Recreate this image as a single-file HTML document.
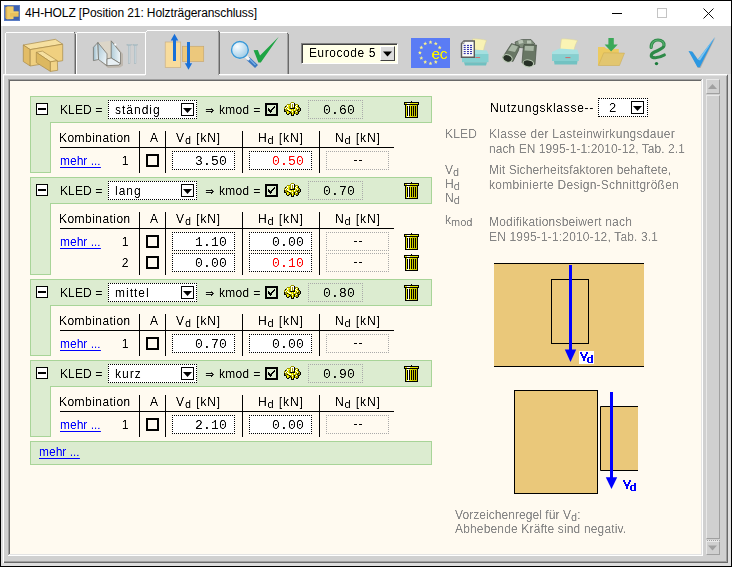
<!DOCTYPE html><html><head><meta charset="utf-8"><style>html,body{margin:0;padding:0;width:732px;height:567px;overflow:hidden;background:#d0d0d0;font-family:"Liberation Sans",sans-serif}</style></head><body><svg width="0" height="0" style="position:absolute"><filter id="crisp" x="0" y="0" width="100%" height="100%"><feComponentTransfer><feFuncA type="table" tableValues="0 0.1 0.9 1"/></feComponentTransfer></filter><filter id="crisp2" x="0" y="0" width="100%" height="100%"><feComponentTransfer><feFuncA type="discrete" tableValues="0 0 1 1 1"/></feComponentTransfer></filter></svg><div style="position:absolute;left:0px;top:0px;width:732px;height:567px;box-sizing:border-box;border:1px solid #000"></div><div style="position:absolute;left:1px;top:1px;width:730px;height:25px;background:#fff"></div><div style="position:absolute;left:1px;top:26px;width:2px;height:540px;background:#dedede"></div><div style="position:absolute;left:3px;top:74px;width:1px;height:492px;background:#fff"></div><div style="position:absolute;left:726px;top:75px;width:1px;height:487px;background:#a0a0a0"></div><div style="position:absolute;left:4px;top:561px;width:723px;height:1px;background:#a0a0a0"></div><div style="position:absolute;left:727px;top:75px;width:1px;height:488px;background:#696969"></div><div style="position:absolute;left:4px;top:562px;width:724px;height:1px;background:#696969"></div><div style="position:absolute;left:728px;top:74px;width:3px;height:492px;background:#dedede"></div><div style="position:absolute;left:1px;top:563px;width:730px;height:3px;background:#dedede"></div><div style="position:absolute;left:8px;top:79px;width:694px;height:1px;background:#a0a0a0"></div><div style="position:absolute;left:8px;top:79px;width:1px;height:476px;background:#a0a0a0"></div><div style="position:absolute;left:9px;top:80px;width:692px;height:1px;background:#696969"></div><div style="position:absolute;left:9px;top:80px;width:1px;height:474px;background:#696969"></div><div style="position:absolute;left:9px;top:554px;width:693px;height:1px;background:#e3e3e3"></div><div style="position:absolute;left:701px;top:80px;width:1px;height:475px;background:#e3e3e3"></div><div style="position:absolute;left:8px;top:555px;width:695px;height:1px;background:#fff"></div><div style="position:absolute;left:702px;top:79px;width:1px;height:477px;background:#fff"></div><div style="position:absolute;left:10px;top:81px;width:691px;height:473px;background:#fffaf0"></div><svg style="position:absolute;left:4px;top:5px" width="16" height="16" viewBox="0 0 16 16">
<rect width="16" height="16" fill="#3f62b0"/>
<rect x="0.5" y="0.5" width="15" height="15" fill="none" stroke="#5a7cc4" stroke-width="1"/>
<path d="M1.8 2.2 L3.5 1.3 L9.6 1.3 L9.6 6.5 L14.6 6.5 L14.6 11.8 L9.6 11.8 L8.6 14.2 L3 14.2 L1.8 13.5 Z" fill="#c89c40" opacity="0.5"/>
<path d="M1.7 2.3 L3.5 1.4 L9.5 1.4 L9.5 14 L3 14.2 L1.7 13.3 Z" fill="#f0cc68"/>
<path d="M1.7 2.3 L3.2 2.3 L3.2 14.1 L1.7 13.3 Z" fill="#dcb050"/>
<path d="M6 6.6 L14.5 6.6 L14.5 11.6 L6 11.6 Z" fill="#e8c05c"/>
<path d="M6 6.6 L14.5 6.6 L14.5 7.6 L6 7.6 Z" fill="#f4d878"/>
</svg><div style="position:absolute;left:25px;top:6px;font-family:'Liberation Sans',sans-serif;font-size:12px;line-height:14px;white-space:nowrap;letter-spacing:-0.1px">4H-HOLZ [Position 21: Holzträgeranschluss]</div><div style="position:absolute;left:612px;top:13px;width:10px;height:1px;background:#000"></div><div style="position:absolute;left:657px;top:8px;width:10px;height:10px;box-sizing:border-box;border:1px solid #c4c4c4"></div><svg style="position:absolute;left:703px;top:8px" width="11" height="11"><path d="M0.5 0.5 L10.5 10.5 M10.5 0.5 L0.5 10.5" stroke="#000" stroke-width="0.95"/></svg><div style="position:absolute;left:5px;top:33px;width:1px;height:41px;background:#ffffff"></div><div style="position:absolute;left:6px;top:32px;width:68px;height:1px;background:#ffffff"></div><div style="position:absolute;left:74px;top:33px;width:1px;height:41px;background:#a0a0a0"></div><div style="position:absolute;left:75px;top:34px;width:1px;height:40px;background:#696969"></div><div style="position:absolute;left:74px;top:32px;width:1px;height:1px;background:#696969"></div><div style="position:absolute;left:76px;top:33px;width:1px;height:41px;background:#ffffff"></div><div style="position:absolute;left:77px;top:32px;width:68px;height:1px;background:#ffffff"></div><div style="position:absolute;left:145px;top:32px;width:1px;height:43px;background:#ffffff"></div><div style="position:absolute;left:146px;top:31px;width:1px;height:1px;background:#ffffff"></div><div style="position:absolute;left:147px;top:30px;width:71px;height:1px;background:#ffffff"></div><div style="position:absolute;left:218px;top:32px;width:1px;height:43px;background:#a0a0a0"></div><div style="position:absolute;left:219px;top:32px;width:1px;height:43px;background:#696969"></div><div style="position:absolute;left:218px;top:31px;width:1px;height:1px;background:#696969"></div><div style="position:absolute;left:220px;top:32px;width:67px;height:1px;background:#ffffff"></div><div style="position:absolute;left:287px;top:33px;width:1px;height:41px;background:#a0a0a0"></div><div style="position:absolute;left:288px;top:34px;width:1px;height:40px;background:#696969"></div><div style="position:absolute;left:287px;top:33px;width:1px;height:1px;background:#696969"></div><div style="position:absolute;left:3px;top:74px;width:143px;height:1px;background:#ffffff"></div><div style="position:absolute;left:219px;top:74px;width:508px;height:1px;background:#ffffff"></div><div style="position:absolute;left:4px;top:75px;width:141px;height:1px;background:#e2e2e2"></div><div style="position:absolute;left:220px;top:75px;width:507px;height:1px;background:#e2e2e2"></div><svg style="position:absolute;left:0;top:0" width="732" height="80" viewBox="0 0 732 80">
<g stroke="#a88a48" stroke-width="0.7" stroke-linejoin="round">
<path d="M23.3 45 L55.4 39.3 L62.7 44.2 L30.2 49.6 Z" fill="#f6e0a0"/>
<path d="M23.3 45 L30.2 49.6 L30.2 66 L23.3 61.5 Z" fill="#e2bc66"/>
<path d="M30.2 49.6 L62.7 44.2 L62.7 60.7 L30.2 66 Z" fill="#f0d080"/>
<path d="M36.3 52.3 L42.4 51.1 L57.3 60.7 L50.4 61.8 Z" fill="#f6e0a0"/>
<path d="M36.3 52.3 L50.4 61.8 L50.4 71.4 L36.3 62.6 Z" fill="#dcb860"/>
<path d="M50.4 61.8 L57.3 60.7 L57.7 70.3 L50.4 71.4 Z" fill="#f2d488"/>
</g>
<!-- tab2: metal hanger -->
<defs>
<linearGradient id="mg1" x1="0" y1="0" x2="1" y2="0"><stop offset="0" stop-color="#98b8c8"/><stop offset="1" stop-color="#eef6f8"/></linearGradient>
<linearGradient id="mg2" x1="0" y1="0" x2="1" y2="1"><stop offset="0" stop-color="#a8c6d4"/><stop offset="1" stop-color="#f6fafc"/></linearGradient>
<linearGradient id="mg3" x1="0" y1="0" x2="1" y2="0"><stop offset="0" stop-color="#b0ccd8"/><stop offset="1" stop-color="#f0f6f8"/></linearGradient>
</defs>
<path d="M100 44 L113 42 L123 54 L123 65.5 L120 67.5 L108 68 L101 62 Z" fill="#a89c88" opacity="0.45"/>
<path d="M97.9 42.5 L111.2 40.8 L111.2 58 L107 58.9 L107 53.8 Z" fill="#dcd6c8"/>
<g stroke="#6c6860" stroke-width="0.7" stroke-linejoin="round">
<path d="M93.4 47.3 L97.9 42.5 L98.5 59.5 L93.4 60.6 Z" fill="url(#mg1)"/>
<path d="M97.9 42.5 L107 53.8 L107 65.7 L98.5 59.5 Z" fill="url(#mg2)"/>
<path d="M111.2 40.8 L120.5 52.7 L120.5 63.7 L111.2 58 Z" fill="url(#mg3)"/>
<path d="M107 65.7 L107 58.9 L111.2 58 L120.5 63.7 L118.8 65.1 Z" fill="#e8f0f4"/>
</g>
<circle cx="115.3" cy="44.6" r="1.1" fill="#ffffff"/>
<g fill="#e0ecf0" stroke="#90a4ac" stroke-width="0.5">
<rect x="128.3" y="45" width="1.6" height="18.5"/><rect x="134.3" y="45" width="1.6" height="18.5"/>
<rect x="127" y="44.3" width="4.2" height="1.2"/><rect x="133" y="44.3" width="4.2" height="1.2"/>
</g>
<!-- tab3: blocks + arrows -->
<rect x="165.2" y="42" width="15.5" height="25.6" fill="#f8dc9c" stroke="#c8b088" stroke-width="0.7"/>
<rect x="182.4" y="46.3" width="21.3" height="15.1" fill="#ecc87c" stroke="#c8a870" stroke-width="0.7"/>
<g fill="#1870d8">
<rect x="173" y="40" width="3" height="21"/>
<path d="M174.5 33.8 L178.3 40.6 L170.7 40.6 Z"/>
<rect x="187" y="42" width="3" height="22"/>
<path d="M184.9 63.3 L192.1 63.3 L188.5 69.8 Z"/>
</g>
<!-- tab4: magnifier + check -->
<defs><radialGradient id="lens" cx="0.35" cy="0.3" r="0.8"><stop offset="0" stop-color="#f8fcff"/><stop offset="1" stop-color="#98c8e4"/></radialGradient></defs>
<path d="M248 58.5 L256.5 66.5" stroke="#3a78c0" stroke-width="4.2" stroke-linecap="butt"/>
<path d="M249.5 59 L255.5 65" stroke="#78b0e8" stroke-width="1.2"/>
<path d="M246 56.5 L249.2 59.7" stroke="#f4f4f4" stroke-width="3"/>
<circle cx="239.9" cy="49.9" r="9.3" fill="#f0e8d8" opacity="0.6"/>
<circle cx="239.9" cy="49.9" r="8.4" fill="url(#lens)" stroke="#3898d8" stroke-width="1.4"/>
<path d="M253.6 50.2 L257.8 50 L260 55.6 L278.8 36.8 L260.8 62.4 L258.4 62.6 Z" fill="#1ea444"/>
</svg><div style="position:absolute;left:301px;top:43px;width:97px;height:21px;box-sizing:border-box;border-top:1px solid #808080;border-left:1px solid #808080;border-bottom:1px solid #fff;border-right:1px solid #fff;background:#ffffe8"></div><div style="position:absolute;left:302px;top:44px;width:95px;height:1px;background:#404040"></div><div style="position:absolute;left:302px;top:44px;width:1px;height:19px;background:#404040"></div><div style="position:absolute;left:309px;top:46px;font-family:'Liberation Sans',sans-serif;font-size:12px;line-height:14px;white-space:nowrap;filter:url(#crisp);letter-spacing:0.55px">Eurocode 5</div><div style="position:absolute;left:380px;top:46px;width:15px;height:15px;box-sizing:border-box;border-top:1px solid #fff;border-left:1px solid #fff;border-bottom:1px solid #404040;border-right:1px solid #404040;background:#dcdcdc"></div><svg style="position:absolute;left:380px;top:46px" width="15" height="15"><path d="M3 5.5 H12 L7.5 10.5 Z" fill="#000"/></svg><svg style="position:absolute;left:0;top:0" width="732" height="80" viewBox="0 0 732 80">
<!-- EC -->
<rect x="411" y="38" width="39" height="30" fill="#5a7cf5"/>
<g fill="#f6f090">
<path transform="translate(430.50,42.20)" d="M0,-2 L0.6,-0.7 L1.9,-0.6 L0.9,0.3 L1.2,1.7 L0,1 L-1.2,1.7 L-0.9,0.3 L-1.9,-0.6 L-0.6,-0.7 Z"/><path transform="translate(435.80,43.62)" d="M0,-2 L0.6,-0.7 L1.9,-0.6 L0.9,0.3 L1.2,1.7 L0,1 L-1.2,1.7 L-0.9,0.3 L-1.9,-0.6 L-0.6,-0.7 Z"/><path transform="translate(439.68,47.50)" d="M0,-2 L0.6,-0.7 L1.9,-0.6 L0.9,0.3 L1.2,1.7 L0,1 L-1.2,1.7 L-0.9,0.3 L-1.9,-0.6 L-0.6,-0.7 Z"/><path transform="translate(435.80,61.98)" d="M0,-2 L0.6,-0.7 L1.9,-0.6 L0.9,0.3 L1.2,1.7 L0,1 L-1.2,1.7 L-0.9,0.3 L-1.9,-0.6 L-0.6,-0.7 Z"/><path transform="translate(430.50,63.40)" d="M0,-2 L0.6,-0.7 L1.9,-0.6 L0.9,0.3 L1.2,1.7 L0,1 L-1.2,1.7 L-0.9,0.3 L-1.9,-0.6 L-0.6,-0.7 Z"/><path transform="translate(425.20,61.98)" d="M0,-2 L0.6,-0.7 L1.9,-0.6 L0.9,0.3 L1.2,1.7 L0,1 L-1.2,1.7 L-0.9,0.3 L-1.9,-0.6 L-0.6,-0.7 Z"/><path transform="translate(421.32,58.10)" d="M0,-2 L0.6,-0.7 L1.9,-0.6 L0.9,0.3 L1.2,1.7 L0,1 L-1.2,1.7 L-0.9,0.3 L-1.9,-0.6 L-0.6,-0.7 Z"/><path transform="translate(419.90,52.80)" d="M0,-2 L0.6,-0.7 L1.9,-0.6 L0.9,0.3 L1.2,1.7 L0,1 L-1.2,1.7 L-0.9,0.3 L-1.9,-0.6 L-0.6,-0.7 Z"/><path transform="translate(421.32,47.50)" d="M0,-2 L0.6,-0.7 L1.9,-0.6 L0.9,0.3 L1.2,1.7 L0,1 L-1.2,1.7 L-0.9,0.3 L-1.9,-0.6 L-0.6,-0.7 Z"/><path transform="translate(425.20,43.62)" d="M0,-2 L0.6,-0.7 L1.9,-0.6 L0.9,0.3 L1.2,1.7 L0,1 L-1.2,1.7 L-0.9,0.3 L-1.9,-0.6 L-0.6,-0.7 Z"/>
</g>
<text x="431.5" y="59.3" font-family="Liberation Sans" font-size="15.5" fill="#f8f400" letter-spacing="-0.4" filter="url(#crisp)">ec</text>
<!-- print preview -->
<path d="M472.4 39 C478 38.5 483 39.5 486.5 40.4 C485 44 484 47 483.5 50.8 L475 49.7 Z" fill="#f8f2b4" stroke="#d8d094" stroke-width="0.5"/>
<path d="M462 54 L474 49.8 L486.8 50.4 L488.5 54 Z" fill="#a4e0e0"/>
<path d="M462 54 L488.5 54 L488.5 62.2 L462 62.2 Z" fill="#84d0d0"/>
<path d="M464 62.2 L487 62.2 L486 65.5 L465 65.5 Z" fill="#70c0c0"/>
<rect x="475.4" y="57" width="4.7" height="1" fill="#d07070"/>
<path d="M461.5 43.5 L464 41 L474.3 41 L474.3 57.3 L461.5 57.3 Z" fill="#fafaf6" stroke="#5c5c5c" stroke-width="1.4"/>
<path d="M461.6 43.6 L464 43.6 L464 41.2 Z" fill="#ffffff" stroke="#5c5c5c" stroke-width="0.6"/>
<g fill="#2424a8">
<rect x="463.7" y="44.9" width="2" height="1"/><rect x="463.7" y="46.9" width="2" height="1"/><rect x="463.7" y="48.9" width="2" height="1"/><rect x="463.7" y="51.1" width="2" height="1"/><rect x="463.7" y="53.1" width="2" height="1"/><rect x="467" y="44.9" width="2" height="1"/><rect x="467" y="46.9" width="2" height="1"/><rect x="467" y="48.9" width="2" height="1"/><rect x="467" y="51.1" width="2" height="1"/><rect x="467" y="53.1" width="2" height="1"/><rect x="470" y="44.9" width="2" height="1"/><rect x="470" y="46.9" width="2" height="1"/><rect x="470" y="48.9" width="2" height="1"/><rect x="470" y="51.1" width="2" height="1"/><rect x="470" y="53.1" width="2" height="1"/>
</g>
<!-- binoculars -->
<g stroke="#3e483c" stroke-width="0.6" stroke-linejoin="round">
<path d="M515 42 L522 39.5 L531 39.5 L535 44 L524 48 L516 47 Z" fill="#7e8c7a"/>
<path d="M511.5 43.5 L519.5 46 L518.5 50.5 L513 61.5 L502.5 57.5 Z" fill="#687664"/>
<path d="M524 44.5 L536.5 45 L535 64.5 L522 63 L523 50 Z" fill="#687664"/>
<path d="M512 44.5 L518 46.5 L515 52 L508 50.5 Z" fill="#a8b6a4" stroke="none"/>
<path d="M525 46 L534 46 L533.5 51 L524.5 50.5 Z" fill="#a8b6a4" stroke="none"/>
<path d="M518 40.5 L522.5 39.8 L523.5 43 L519 44 Z" fill="#b8c4b4" stroke="none"/>
<path d="M527 40.5 L531 40.5 L531.5 43.5 L527 43.5 Z" fill="#b8c4b4" stroke="none"/>
</g>
<ellipse cx="507.5" cy="58.3" rx="4.8" ry="3.6" transform="rotate(22 507.5 58.3)" fill="#263026" stroke="#b8c8b2" stroke-width="1.1"/>
<ellipse cx="528.3" cy="63.4" rx="5.3" ry="3.5" transform="rotate(8 528.3 63.4)" fill="#263026" stroke="#b8c8b2" stroke-width="1.1"/>
<!-- printer -->
<path d="M561.4 39 C566 38.5 572 39.5 577.5 40.4 C575.5 44 574.5 47.5 573.8 51.1 L560.1 49.4 Z" fill="#faf4b4" stroke="#d8d098" stroke-width="0.5"/>
<path d="M552 52.1 L559.4 48.4 L577.5 49.8 L578.8 54.1 L552 54.1 Z" fill="#a8e2e2"/>
<path d="M552 54.1 L578.8 54.1 L578.8 61 L552 61 Z" fill="#86d0d0"/>
<path d="M554 61 L577.5 61 L577 64.5 L554.5 64.5 Z" fill="#72c2c2"/>
<rect x="565.4" y="57.1" width="5" height="1" fill="#d06a6a"/>
<!-- folder -->
<path d="M598 47.1 L604.4 47.1 L606.4 48.8 L618.8 49.1 L618.8 65.2 L598 65.2 Z" fill="#ecca60"/>
<path d="M603.7 52.8 L624.5 53.1 L619.5 65.5 L598.4 65.5 Z" fill="#e2c670" stroke="#c8a850" stroke-width="0.5"/>
<path d="M608.4 38 L613.8 38 L613.8 44.4 L617.8 44.4 L611.1 51.4 L604.6 44.4 L608.4 44.4 Z" fill="#3aa858"/>
<!-- help -->
<path d="M651.2 47.5 C650.8 42.5 654.5 40 658 40 C662 40 664.5 42.5 664 45.5 C663.5 48.8 658.5 50 654.5 52 C650.5 54 650.3 57.3 653.5 57.6 C656.5 58 661 57 664.3 55" fill="none" stroke="#2e8a48" stroke-width="3.2" stroke-linecap="round"/>
<path d="M651.2 47.5 C650.8 42.5 654.5 40 658 40 C662 40 664.5 42.5 664 45.5" fill="none" stroke="#58b070" stroke-width="1.2" stroke-linecap="round"/>
<circle cx="656.5" cy="63.6" r="1.7" fill="#1a7a3a"/>
<!-- blue check -->
<path d="M689.5 52 L693 52.3 L698.2 60 L715.5 37.5 L700.5 68 L698 68 Z" fill="#908a80" opacity="0.5"/>
<path d="M688.5 51 L692.2 51.5 L697.8 59.5 L715 37 L699.8 67.3 L697.5 67.3 Z" fill="#2c98e2"/>
<path d="M697.8 59.5 L715 37 L700 60.5 Z" fill="#7cc4f0"/>
</svg><div style="position:absolute;left:706px;top:79px;width:14px;height:15px;box-sizing:border-box;border-top:1px solid #e8e8e8;border-left:1px solid #e8e8e8;border-right:1px solid #a0a0a0;border-bottom:1px solid #a0a0a0"></div><svg style="position:absolute;left:706px;top:79px" width="14" height="15"><path d="M2 10 H11 L6.5 5 Z" fill="#a0a0a0"/></svg><div style="position:absolute;left:706px;top:95px;width:14px;height:444px;box-sizing:border-box;border-top:1px solid #e8e8e8;border-left:1px solid #e8e8e8;border-right:1px solid #a0a0a0;border-bottom:1px solid #a0a0a0"></div><div style="position:absolute;left:706px;top:540px;width:14px;height:1px;background:repeating-linear-gradient(90deg,#e8e8e8 0 1px,#a0a0a0 1px 2px)"></div><div style="position:absolute;left:706px;top:541px;width:14px;height:14px;box-sizing:border-box;border-top:1px solid #e8e8e8;border-left:1px solid #e8e8e8;border-right:1px solid #a0a0a0;border-bottom:1px solid #a0a0a0"></div><svg style="position:absolute;left:706px;top:541px" width="14" height="14"><path d="M2 4.5 H11 L6.5 9.5 Z" fill="#a0a0a0"/></svg><div style="position:absolute;left:490px;top:101px;font-family:'Liberation Sans',sans-serif;font-size:12px;line-height:14px;white-space:nowrap;filter:url(#crisp);letter-spacing:0.7px">Nutzungsklasse--</div><div style="position:absolute;left:598px;top:98px;width:50px;height:19px;box-sizing:border-box;border:1px dotted #000;background:#fff"></div><div style="position:absolute;left:609px;top:101px;font-family:'Liberation Sans',sans-serif;font-size:12px;line-height:14px;white-space:nowrap;filter:url(#crisp);font-size:13px">2</div><div style="position:absolute;left:631px;top:101px;width:13px;height:13px;box-sizing:border-box;border:1px solid #000;background:#fff"></div><svg style="position:absolute;left:631px;top:101px" width="13" height="13"><path d="M2 5 H11 L6.5 10 Z" fill="#000"/></svg><div style="position:absolute;left:445px;top:127px;font-family:'Liberation Sans',sans-serif;font-size:12px;line-height:14px;white-space:nowrap;filter:url(#crisp);color:#858585;letter-spacing:0.2px">KLED</div><div style="position:absolute;left:489px;top:127px;font-family:'Liberation Sans',sans-serif;font-size:12px;line-height:14px;white-space:nowrap;filter:url(#crisp);color:#858585;letter-spacing:0.3px">Klasse der Lasteinwirkungsdauer</div><div style="position:absolute;left:489px;top:142px;font-family:'Liberation Sans',sans-serif;font-size:12px;line-height:14px;white-space:nowrap;filter:url(#crisp);color:#858585;letter-spacing:0.06px">nach EN 1995-1-1:2010-12, Tab. 2.1</div><div style="position:absolute;left:445px;top:163px;font-family:'Liberation Sans',sans-serif;font-size:12px;line-height:14px;white-space:nowrap;filter:url(#crisp);color:#858585;">V<span style="font-size:11px;position:relative;top:2px">d</span></div><div style="position:absolute;left:489px;top:163px;font-family:'Liberation Sans',sans-serif;font-size:12px;line-height:14px;white-space:nowrap;filter:url(#crisp);color:#858585;letter-spacing:0.1px">Mit Sicherheitsfaktoren behaftete,</div><div style="position:absolute;left:445px;top:177px;font-family:'Liberation Sans',sans-serif;font-size:12px;line-height:14px;white-space:nowrap;filter:url(#crisp);color:#858585;">H<span style="font-size:11px;position:relative;top:2px">d</span></div><div style="position:absolute;left:489px;top:178px;font-family:'Liberation Sans',sans-serif;font-size:12px;line-height:14px;white-space:nowrap;filter:url(#crisp);color:#858585;letter-spacing:0.27px">kombinierte Design-Schnittgrößen</div><div style="position:absolute;left:445px;top:191px;font-family:'Liberation Sans',sans-serif;font-size:12px;line-height:14px;white-space:nowrap;filter:url(#crisp);color:#858585;">N<span style="font-size:11px;position:relative;top:2px">d</span></div><div style="position:absolute;left:445px;top:213px;font-family:'Liberation Sans',sans-serif;font-size:12px;line-height:14px;white-space:nowrap;filter:url(#crisp);color:#858585;">k<span style="font-size:11px;position:relative;top:2px">mod</span></div><div style="position:absolute;left:489px;top:215px;font-family:'Liberation Sans',sans-serif;font-size:12px;line-height:14px;white-space:nowrap;filter:url(#crisp);color:#858585;letter-spacing:0.2px">Modifikationsbeiwert nach</div><div style="position:absolute;left:489px;top:230px;font-family:'Liberation Sans',sans-serif;font-size:12px;line-height:14px;white-space:nowrap;filter:url(#crisp);color:#858585;letter-spacing:0.16px">EN 1995-1-1:2010-12, Tab. 3.1</div><div style="position:absolute;left:455px;top:508px;font-family:'Liberation Sans',sans-serif;font-size:12px;line-height:14px;white-space:nowrap;filter:url(#crisp);color:#858585;letter-spacing:0.06px">Vorzeichenregel für V<span style="font-size:11px;position:relative;top:2px">d</span>:</div><div style="position:absolute;left:455px;top:522px;font-family:'Liberation Sans',sans-serif;font-size:12px;line-height:14px;white-space:nowrap;filter:url(#crisp);color:#858585;letter-spacing:0.16px">Abhebende Kräfte sind negativ.</div><svg style="position:absolute;left:0;top:0" width="732" height="567" viewBox="0 0 732 567">
<rect x="494" y="263" width="150" height="104" fill="#eac87a"/>
<rect x="494" y="263" width="150" height="1" fill="#000"/>
<rect x="494" y="366" width="150" height="1" fill="#000"/>
<rect x="551.5" y="279.5" width="37" height="64" fill="none" stroke="#000" stroke-width="1"/>
<rect x="569" y="265" width="3" height="86" fill="#0000ff"/>
<path d="M564.8 349.6 L576.2 349.6 L570.5 362 Z" fill="#0000ff"/>
<rect x="579" y="351" width="15" height="13" fill="#fff"/>
<rect x="514.5" y="390.5" width="83" height="103" fill="#eac87a" stroke="#000" stroke-width="1"/>
<path d="M638 406.5 L600.5 406.5 L600.5 470.5 L638 470.5" fill="#eac87a" stroke="#000" stroke-width="1"/>
<rect x="610" y="392" width="3" height="86" fill="#0000ff"/>
<path d="M605.8 477.3 L617.2 477.3 L611.5 489 Z" fill="#0000ff"/>
</svg><svg style="position:absolute;left:0;top:0" width="732" height="567" shape-rendering="crispEdges"><g fill="#0000ff"><rect x="580" y="352" width="1" height="1"/><rect x="581" y="352" width="1" height="1"/><rect x="586" y="352" width="1" height="1"/><rect x="587" y="352" width="1" height="1"/><rect x="580" y="353" width="1" height="1"/><rect x="581" y="353" width="1" height="1"/><rect x="586" y="353" width="1" height="1"/><rect x="587" y="353" width="1" height="1"/><rect x="581" y="354" width="1" height="1"/><rect x="582" y="354" width="1" height="1"/><rect x="585" y="354" width="1" height="1"/><rect x="586" y="354" width="1" height="1"/><rect x="581" y="355" width="1" height="1"/><rect x="582" y="355" width="1" height="1"/><rect x="585" y="355" width="1" height="1"/><rect x="586" y="355" width="1" height="1"/><rect x="582" y="356" width="1" height="1"/><rect x="583" y="356" width="1" height="1"/><rect x="584" y="356" width="1" height="1"/><rect x="585" y="356" width="1" height="1"/><rect x="582" y="357" width="1" height="1"/><rect x="583" y="357" width="1" height="1"/><rect x="584" y="357" width="1" height="1"/><rect x="585" y="357" width="1" height="1"/><rect x="583" y="358" width="1" height="1"/><rect x="584" y="358" width="1" height="1"/><rect x="583" y="359" width="1" height="1"/><rect x="584" y="359" width="1" height="1"/><rect x="583" y="360" width="1" height="1"/><rect x="584" y="360" width="1" height="1"/><rect x="591" y="355" width="1" height="1"/><rect x="592" y="355" width="1" height="1"/><rect x="591" y="356" width="1" height="1"/><rect x="592" y="356" width="1" height="1"/><rect x="588" y="357" width="1" height="1"/><rect x="589" y="357" width="1" height="1"/><rect x="590" y="357" width="1" height="1"/><rect x="591" y="357" width="1" height="1"/><rect x="592" y="357" width="1" height="1"/><rect x="587" y="358" width="1" height="1"/><rect x="588" y="358" width="1" height="1"/><rect x="591" y="358" width="1" height="1"/><rect x="592" y="358" width="1" height="1"/><rect x="587" y="359" width="1" height="1"/><rect x="588" y="359" width="1" height="1"/><rect x="591" y="359" width="1" height="1"/><rect x="592" y="359" width="1" height="1"/><rect x="587" y="360" width="1" height="1"/><rect x="588" y="360" width="1" height="1"/><rect x="591" y="360" width="1" height="1"/><rect x="592" y="360" width="1" height="1"/><rect x="587" y="361" width="1" height="1"/><rect x="588" y="361" width="1" height="1"/><rect x="591" y="361" width="1" height="1"/><rect x="592" y="361" width="1" height="1"/><rect x="588" y="362" width="1" height="1"/><rect x="589" y="362" width="1" height="1"/><rect x="590" y="362" width="1" height="1"/><rect x="591" y="362" width="1" height="1"/><rect x="592" y="362" width="1" height="1"/></g></svg><svg style="position:absolute;left:0;top:0" width="732" height="567" shape-rendering="crispEdges"><g fill="#0000ff"><rect x="623" y="480" width="1" height="1"/><rect x="624" y="480" width="1" height="1"/><rect x="629" y="480" width="1" height="1"/><rect x="630" y="480" width="1" height="1"/><rect x="623" y="481" width="1" height="1"/><rect x="624" y="481" width="1" height="1"/><rect x="629" y="481" width="1" height="1"/><rect x="630" y="481" width="1" height="1"/><rect x="624" y="482" width="1" height="1"/><rect x="625" y="482" width="1" height="1"/><rect x="628" y="482" width="1" height="1"/><rect x="629" y="482" width="1" height="1"/><rect x="624" y="483" width="1" height="1"/><rect x="625" y="483" width="1" height="1"/><rect x="628" y="483" width="1" height="1"/><rect x="629" y="483" width="1" height="1"/><rect x="625" y="484" width="1" height="1"/><rect x="626" y="484" width="1" height="1"/><rect x="627" y="484" width="1" height="1"/><rect x="628" y="484" width="1" height="1"/><rect x="625" y="485" width="1" height="1"/><rect x="626" y="485" width="1" height="1"/><rect x="627" y="485" width="1" height="1"/><rect x="628" y="485" width="1" height="1"/><rect x="626" y="486" width="1" height="1"/><rect x="627" y="486" width="1" height="1"/><rect x="626" y="487" width="1" height="1"/><rect x="627" y="487" width="1" height="1"/><rect x="626" y="488" width="1" height="1"/><rect x="627" y="488" width="1" height="1"/><rect x="634" y="483" width="1" height="1"/><rect x="635" y="483" width="1" height="1"/><rect x="634" y="484" width="1" height="1"/><rect x="635" y="484" width="1" height="1"/><rect x="631" y="485" width="1" height="1"/><rect x="632" y="485" width="1" height="1"/><rect x="633" y="485" width="1" height="1"/><rect x="634" y="485" width="1" height="1"/><rect x="635" y="485" width="1" height="1"/><rect x="630" y="486" width="1" height="1"/><rect x="631" y="486" width="1" height="1"/><rect x="634" y="486" width="1" height="1"/><rect x="635" y="486" width="1" height="1"/><rect x="630" y="487" width="1" height="1"/><rect x="631" y="487" width="1" height="1"/><rect x="634" y="487" width="1" height="1"/><rect x="635" y="487" width="1" height="1"/><rect x="630" y="488" width="1" height="1"/><rect x="631" y="488" width="1" height="1"/><rect x="634" y="488" width="1" height="1"/><rect x="635" y="488" width="1" height="1"/><rect x="630" y="489" width="1" height="1"/><rect x="631" y="489" width="1" height="1"/><rect x="634" y="489" width="1" height="1"/><rect x="635" y="489" width="1" height="1"/><rect x="631" y="490" width="1" height="1"/><rect x="632" y="490" width="1" height="1"/><rect x="633" y="490" width="1" height="1"/><rect x="634" y="490" width="1" height="1"/><rect x="635" y="490" width="1" height="1"/></g></svg><div style="position:absolute;left:30px;top:96px;width:402px;height:27px;box-sizing:border-box;border:1px solid #a8d498;background:#dcecd0"></div><div style="position:absolute;left:30px;top:122px;width:21px;height:51px;box-sizing:border-box;border:1px solid #a8d498;background:#dcecd0"></div><div style="position:absolute;left:31px;top:121px;width:19px;height:3px;background:#dcecd0"></div><div style="position:absolute;left:36px;top:103px;width:12px;height:12px;box-sizing:border-box;border:1px solid #000;background:#fff"></div><div style="position:absolute;left:38px;top:108px;width:8px;height:2px;background:#000"></div><div style="position:absolute;left:60px;top:103px;font-family:'Liberation Sans',sans-serif;font-size:12px;line-height:14px;white-space:nowrap;filter:url(#crisp);letter-spacing:0.1px">KLED =</div><div style="position:absolute;left:108px;top:100px;width:89px;height:19px;box-sizing:border-box;border:1px dotted #000;background:#fff"></div><div style="position:absolute;left:115px;top:103px;font-family:'Liberation Sans',sans-serif;font-size:12px;line-height:14px;white-space:nowrap;filter:url(#crisp);letter-spacing:1px">ständig</div><div style="position:absolute;left:181px;top:103px;width:13px;height:13px;box-sizing:border-box;border:1px solid #000;background:#fff"></div><svg style="position:absolute;left:181px;top:103px" width="13" height="13"><path d="M2 5 H11 L6.5 10 Z" fill="#000"/></svg><div style="position:absolute;left:205px;top:103px;font-family:'Liberation Sans',sans-serif;font-size:12px;line-height:14px;white-space:nowrap;filter:url(#crisp);font-size:11px">&#8658;</div><div style="position:absolute;left:219px;top:103px;font-family:'Liberation Sans',sans-serif;font-size:12px;line-height:14px;white-space:nowrap;filter:url(#crisp);letter-spacing:0.3px">kmod =</div><div style="position:absolute;left:265px;top:103px;width:13px;height:13px;box-sizing:border-box;border:2px solid #000"></div><svg style="position:absolute;left:268px;top:106px" width="7" height="7" shape-rendering="crispEdges"><g fill="#000"><rect x="6" y="0" width="1" height="1"/><rect x="5" y="1" width="1" height="1"/><rect x="6" y="1" width="1" height="1"/><rect x="0" y="2" width="1" height="1"/><rect x="4" y="2" width="1" height="1"/><rect x="5" y="2" width="1" height="1"/><rect x="0" y="3" width="1" height="1"/><rect x="1" y="3" width="1" height="1"/><rect x="3" y="3" width="1" height="1"/><rect x="4" y="3" width="1" height="1"/><rect x="0" y="4" width="1" height="1"/><rect x="1" y="4" width="1" height="1"/><rect x="2" y="4" width="1" height="1"/><rect x="3" y="4" width="1" height="1"/><rect x="1" y="5" width="1" height="1"/><rect x="2" y="5" width="1" height="1"/><rect x="3" y="5" width="1" height="1"/><rect x="2" y="6" width="1" height="1"/></g></svg><svg style="position:absolute;left:283px;top:101px" width="19" height="15" shape-rendering="crispEdges"><path d="M8 1h1v1h-1zM9 1h1v1h-1zM10 1h1v1h-1zM7 2h1v1h-1zM4 3h1v1h-1zM5 3h1v1h-1zM6 3h1v1h-1zM7 3h1v1h-1zM9 3h1v1h-1zM12 3h1v1h-1zM13 3h1v1h-1zM14 3h1v1h-1zM3 4h1v1h-1zM7 4h1v1h-1zM9 4h1v1h-1zM12 4h1v1h-1zM3 5h1v1h-1zM6 5h1v1h-1zM7 5h1v1h-1zM9 5h1v1h-1zM14 5h1v1h-1zM1 6h1v1h-1zM2 6h1v1h-1zM4 6h1v1h-1zM6 6h1v1h-1zM7 6h1v1h-1zM9 6h1v1h-1zM10 6h1v1h-1zM15 6h1v1h-1zM1 7h1v1h-1zM3 7h1v1h-1zM6 7h1v1h-1zM13 7h1v1h-1zM15 7h1v1h-1zM16 7h1v1h-1zM2 8h1v1h-1zM3 8h1v1h-1zM8 8h1v1h-1zM10 8h1v1h-1zM13 8h1v1h-1zM14 8h1v1h-1zM16 8h1v1h-1zM2 9h1v1h-1zM3 9h1v1h-1zM5 9h1v1h-1zM10 9h1v1h-1zM12 9h1v1h-1zM13 9h1v1h-1zM15 9h1v1h-1zM16 9h1v1h-1zM3 10h1v1h-1zM5 10h1v1h-1zM7 10h1v1h-1zM8 10h1v1h-1zM10 10h1v1h-1zM12 10h1v1h-1zM14 10h1v1h-1zM6 11h1v1h-1zM8 11h1v1h-1zM10 11h1v1h-1zM13 11h1v1h-1zM14 11h1v1h-1zM5 12h1v1h-1zM7 12h1v1h-1zM10 12h1v1h-1zM12 12h1v1h-1zM13 12h1v1h-1zM14 12h1v1h-1z" fill="#9c9800"/><path d="M5 4h1v1h-1zM6 4h1v1h-1zM14 4h1v1h-1zM5 5h1v1h-1zM13 5h1v1h-1zM5 6h1v1h-1zM12 6h1v1h-1zM14 6h1v1h-1zM5 7h1v1h-1zM12 7h1v1h-1zM4 8h1v1h-1zM6 8h1v1h-1zM7 8h1v1h-1zM9 8h1v1h-1zM12 8h1v1h-1zM8 9h1v1h-1zM9 9h1v1h-1zM11 9h1v1h-1zM4 10h1v1h-1zM4 11h1v1h-1zM5 11h1v1h-1zM9 11h1v1h-1zM12 11h1v1h-1zM4 12h1v1h-1zM9 12h1v1h-1zM9 13h1v1h-1z" fill="#ffff00"/><path d="M8 2h1v1h-1zM9 2h1v1h-1zM10 2h1v1h-1zM8 3h1v1h-1zM10 3h1v1h-1zM4 4h1v1h-1zM8 4h1v1h-1zM10 4h1v1h-1zM13 4h1v1h-1zM4 5h1v1h-1zM8 5h1v1h-1zM10 5h1v1h-1zM12 5h1v1h-1zM3 6h1v1h-1zM8 6h1v1h-1zM13 6h1v1h-1zM2 7h1v1h-1zM4 7h1v1h-1zM14 7h1v1h-1zM5 8h1v1h-1zM11 8h1v1h-1zM6 9h1v1h-1zM7 9h1v1h-1zM9 10h1v1h-1zM13 10h1v1h-1z" fill="#ffffff"/><path d="M11 2h1v1h-1zM11 3h1v1h-1zM11 4h1v1h-1zM15 4h1v1h-1zM2 5h1v1h-1zM11 5h1v1h-1zM15 5h1v1h-1zM11 6h1v1h-1zM16 6h1v1h-1zM7 7h1v1h-1zM8 7h1v1h-1zM9 7h1v1h-1zM10 7h1v1h-1zM11 7h1v1h-1zM17 7h1v1h-1zM1 8h1v1h-1zM15 8h1v1h-1zM17 8h1v1h-1zM1 9h1v1h-1zM4 9h1v1h-1zM14 9h1v1h-1zM17 9h1v1h-1zM1 10h1v1h-1zM2 10h1v1h-1zM6 10h1v1h-1zM11 10h1v1h-1zM15 10h1v1h-1zM16 10h1v1h-1zM3 11h1v1h-1zM7 11h1v1h-1zM11 11h1v1h-1zM15 11h1v1h-1zM3 12h1v1h-1zM6 12h1v1h-1zM8 12h1v1h-1zM11 12h1v1h-1zM15 12h1v1h-1zM4 13h1v1h-1zM5 13h1v1h-1zM8 13h1v1h-1zM10 13h1v1h-1zM13 13h1v1h-1zM14 13h1v1h-1zM8 14h1v1h-1zM9 14h1v1h-1zM10 14h1v1h-1z" fill="#000000"/></svg><div style="position:absolute;left:308px;top:100px;width:55px;height:19px;box-sizing:border-box;border:1px dotted #aaa;background:transparent"></div><div style="position:absolute;left:155px;width:200px;text-align:right;top:104px;font-family:'Liberation Mono',monospace;font-size:13px;line-height:14px;letter-spacing:0.2px;color:#000;white-space:nowrap;filter:url(#crisp)">0.60</div><svg style="position:absolute;left:404px;top:100px" width="16" height="19" viewBox="0 0 16 19">
<rect x="1" y="4" width="13" height="14" fill="#000"/>
<rect x="2" y="5" width="11" height="12" fill="#e8e800"/>
<rect x="3" y="5" width="2" height="12" fill="#fff"/>
<rect x="8" y="5" width="5" height="12" fill="#c8c800"/>
<rect x="3" y="6" width="1" height="10" fill="#000"/>
<rect x="5" y="6" width="1" height="10" fill="#000"/>
<rect x="7" y="6" width="1" height="10" fill="#000"/>
<rect x="9" y="6" width="1" height="10" fill="#000"/>
<rect x="11" y="6" width="1" height="10" fill="#000"/>
<rect x="0" y="2" width="15" height="3" fill="#000"/>
<rect x="1" y="3" width="13" height="1" fill="#e8e800"/>
<rect x="3" y="3" width="3" height="1" fill="#fff"/>
<rect x="7" y="1" width="1" height="1" fill="#000"/>
</svg><div style="position:absolute;left:59px;top:131px;font-family:'Liberation Sans',sans-serif;font-size:12px;line-height:14px;white-space:nowrap;filter:url(#crisp);letter-spacing:0.45px">Kombination</div><div style="position:absolute;left:150px;top:131px;font-family:'Liberation Sans',sans-serif;font-size:12px;line-height:14px;white-space:nowrap;filter:url(#crisp);">A</div><div style="position:absolute;left:176px;top:131px;font-family:'Liberation Sans',sans-serif;font-size:12px;line-height:14px;white-space:nowrap;filter:url(#crisp);letter-spacing:0.9px">V<span style="font-size:11px;position:relative;top:2px">d</span> [kN]</div><div style="position:absolute;left:258px;top:131px;font-family:'Liberation Sans',sans-serif;font-size:12px;line-height:14px;white-space:nowrap;filter:url(#crisp);letter-spacing:0.9px">H<span style="font-size:11px;position:relative;top:2px">d</span> [kN]</div><div style="position:absolute;left:335px;top:131px;font-family:'Liberation Sans',sans-serif;font-size:12px;line-height:14px;white-space:nowrap;filter:url(#crisp);letter-spacing:0.9px">N<span style="font-size:11px;position:relative;top:2px">d</span> [kN]</div><div style="position:absolute;left:60px;top:147px;width:334px;height:1px;background:#000"></div><div style="position:absolute;left:139px;top:131px;width:1px;height:42px;background:#000"></div><div style="position:absolute;left:165px;top:131px;width:1px;height:42px;background:#000"></div><div style="position:absolute;left:242px;top:131px;width:1px;height:42px;background:#000"></div><div style="position:absolute;left:319px;top:131px;width:1px;height:42px;background:#000"></div><div style="position:absolute;left:60px;top:154px;font-family:'Liberation Sans',sans-serif;font-size:12px;line-height:14px;white-space:nowrap;filter:url(#crisp);color:#0000ff;text-decoration:underline;text-underline-offset:2px">mehr ...</div><div style="position:absolute;left:100px;top:154px;font-family:'Liberation Sans',sans-serif;font-size:12px;line-height:14px;white-space:nowrap;filter:url(#crisp);width:28.5px;text-align:right">1</div><div style="position:absolute;left:146px;top:154px;width:13px;height:13px;box-sizing:border-box;border:2px solid #000"></div><div style="position:absolute;left:172px;top:151px;width:63px;height:19px;box-sizing:border-box;border:1px dotted #000;background:#fff"></div><div style="position:absolute;left:27px;width:200px;text-align:right;top:155px;font-family:'Liberation Mono',monospace;font-size:13px;line-height:14px;letter-spacing:0.2px;color:#000;white-space:nowrap;filter:url(#crisp)">3.50</div><div style="position:absolute;left:249px;top:151px;width:63px;height:19px;box-sizing:border-box;border:1px dotted #000;background:#fff"></div><div style="position:absolute;left:104px;width:200px;text-align:right;top:155px;font-family:'Liberation Mono',monospace;font-size:13px;line-height:14px;letter-spacing:0.2px;color:#f00;white-space:nowrap;filter:url(#crisp)">0.50</div><div style="position:absolute;left:326px;top:151px;width:63px;height:19px;box-sizing:border-box;border:1px dotted #aaa;background:transparent"></div><div style="position:absolute;left:354px;top:160px;width:3px;height:1px;background:#000"></div><div style="position:absolute;left:359px;top:160px;width:3px;height:1px;background:#000"></div><div style="position:absolute;left:30px;top:177px;width:402px;height:27px;box-sizing:border-box;border:1px solid #a8d498;background:#dcecd0"></div><div style="position:absolute;left:30px;top:203px;width:21px;height:51px;box-sizing:border-box;border:1px solid #a8d498;background:#dcecd0"></div><div style="position:absolute;left:30px;top:203px;width:21px;height:72px;box-sizing:border-box;border:1px solid #a8d498;background:#dcecd0"></div><div style="position:absolute;left:31px;top:202px;width:19px;height:3px;background:#dcecd0"></div><div style="position:absolute;left:36px;top:184px;width:12px;height:12px;box-sizing:border-box;border:1px solid #000;background:#fff"></div><div style="position:absolute;left:38px;top:189px;width:8px;height:2px;background:#000"></div><div style="position:absolute;left:60px;top:184px;font-family:'Liberation Sans',sans-serif;font-size:12px;line-height:14px;white-space:nowrap;filter:url(#crisp);letter-spacing:0.1px">KLED =</div><div style="position:absolute;left:108px;top:181px;width:89px;height:19px;box-sizing:border-box;border:1px dotted #000;background:#fff"></div><div style="position:absolute;left:115px;top:184px;font-family:'Liberation Sans',sans-serif;font-size:12px;line-height:14px;white-space:nowrap;filter:url(#crisp);letter-spacing:1px">lang</div><div style="position:absolute;left:181px;top:184px;width:13px;height:13px;box-sizing:border-box;border:1px solid #000;background:#fff"></div><svg style="position:absolute;left:181px;top:184px" width="13" height="13"><path d="M2 5 H11 L6.5 10 Z" fill="#000"/></svg><div style="position:absolute;left:205px;top:184px;font-family:'Liberation Sans',sans-serif;font-size:12px;line-height:14px;white-space:nowrap;filter:url(#crisp);font-size:11px">&#8658;</div><div style="position:absolute;left:219px;top:184px;font-family:'Liberation Sans',sans-serif;font-size:12px;line-height:14px;white-space:nowrap;filter:url(#crisp);letter-spacing:0.3px">kmod =</div><div style="position:absolute;left:265px;top:184px;width:13px;height:13px;box-sizing:border-box;border:2px solid #000"></div><svg style="position:absolute;left:268px;top:187px" width="7" height="7" shape-rendering="crispEdges"><g fill="#000"><rect x="6" y="0" width="1" height="1"/><rect x="5" y="1" width="1" height="1"/><rect x="6" y="1" width="1" height="1"/><rect x="0" y="2" width="1" height="1"/><rect x="4" y="2" width="1" height="1"/><rect x="5" y="2" width="1" height="1"/><rect x="0" y="3" width="1" height="1"/><rect x="1" y="3" width="1" height="1"/><rect x="3" y="3" width="1" height="1"/><rect x="4" y="3" width="1" height="1"/><rect x="0" y="4" width="1" height="1"/><rect x="1" y="4" width="1" height="1"/><rect x="2" y="4" width="1" height="1"/><rect x="3" y="4" width="1" height="1"/><rect x="1" y="5" width="1" height="1"/><rect x="2" y="5" width="1" height="1"/><rect x="3" y="5" width="1" height="1"/><rect x="2" y="6" width="1" height="1"/></g></svg><svg style="position:absolute;left:283px;top:182px" width="19" height="15" shape-rendering="crispEdges"><path d="M8 1h1v1h-1zM9 1h1v1h-1zM10 1h1v1h-1zM7 2h1v1h-1zM4 3h1v1h-1zM5 3h1v1h-1zM6 3h1v1h-1zM7 3h1v1h-1zM9 3h1v1h-1zM12 3h1v1h-1zM13 3h1v1h-1zM14 3h1v1h-1zM3 4h1v1h-1zM7 4h1v1h-1zM9 4h1v1h-1zM12 4h1v1h-1zM3 5h1v1h-1zM6 5h1v1h-1zM7 5h1v1h-1zM9 5h1v1h-1zM14 5h1v1h-1zM1 6h1v1h-1zM2 6h1v1h-1zM4 6h1v1h-1zM6 6h1v1h-1zM7 6h1v1h-1zM9 6h1v1h-1zM10 6h1v1h-1zM15 6h1v1h-1zM1 7h1v1h-1zM3 7h1v1h-1zM6 7h1v1h-1zM13 7h1v1h-1zM15 7h1v1h-1zM16 7h1v1h-1zM2 8h1v1h-1zM3 8h1v1h-1zM8 8h1v1h-1zM10 8h1v1h-1zM13 8h1v1h-1zM14 8h1v1h-1zM16 8h1v1h-1zM2 9h1v1h-1zM3 9h1v1h-1zM5 9h1v1h-1zM10 9h1v1h-1zM12 9h1v1h-1zM13 9h1v1h-1zM15 9h1v1h-1zM16 9h1v1h-1zM3 10h1v1h-1zM5 10h1v1h-1zM7 10h1v1h-1zM8 10h1v1h-1zM10 10h1v1h-1zM12 10h1v1h-1zM14 10h1v1h-1zM6 11h1v1h-1zM8 11h1v1h-1zM10 11h1v1h-1zM13 11h1v1h-1zM14 11h1v1h-1zM5 12h1v1h-1zM7 12h1v1h-1zM10 12h1v1h-1zM12 12h1v1h-1zM13 12h1v1h-1zM14 12h1v1h-1z" fill="#9c9800"/><path d="M5 4h1v1h-1zM6 4h1v1h-1zM14 4h1v1h-1zM5 5h1v1h-1zM13 5h1v1h-1zM5 6h1v1h-1zM12 6h1v1h-1zM14 6h1v1h-1zM5 7h1v1h-1zM12 7h1v1h-1zM4 8h1v1h-1zM6 8h1v1h-1zM7 8h1v1h-1zM9 8h1v1h-1zM12 8h1v1h-1zM8 9h1v1h-1zM9 9h1v1h-1zM11 9h1v1h-1zM4 10h1v1h-1zM4 11h1v1h-1zM5 11h1v1h-1zM9 11h1v1h-1zM12 11h1v1h-1zM4 12h1v1h-1zM9 12h1v1h-1zM9 13h1v1h-1z" fill="#ffff00"/><path d="M8 2h1v1h-1zM9 2h1v1h-1zM10 2h1v1h-1zM8 3h1v1h-1zM10 3h1v1h-1zM4 4h1v1h-1zM8 4h1v1h-1zM10 4h1v1h-1zM13 4h1v1h-1zM4 5h1v1h-1zM8 5h1v1h-1zM10 5h1v1h-1zM12 5h1v1h-1zM3 6h1v1h-1zM8 6h1v1h-1zM13 6h1v1h-1zM2 7h1v1h-1zM4 7h1v1h-1zM14 7h1v1h-1zM5 8h1v1h-1zM11 8h1v1h-1zM6 9h1v1h-1zM7 9h1v1h-1zM9 10h1v1h-1zM13 10h1v1h-1z" fill="#ffffff"/><path d="M11 2h1v1h-1zM11 3h1v1h-1zM11 4h1v1h-1zM15 4h1v1h-1zM2 5h1v1h-1zM11 5h1v1h-1zM15 5h1v1h-1zM11 6h1v1h-1zM16 6h1v1h-1zM7 7h1v1h-1zM8 7h1v1h-1zM9 7h1v1h-1zM10 7h1v1h-1zM11 7h1v1h-1zM17 7h1v1h-1zM1 8h1v1h-1zM15 8h1v1h-1zM17 8h1v1h-1zM1 9h1v1h-1zM4 9h1v1h-1zM14 9h1v1h-1zM17 9h1v1h-1zM1 10h1v1h-1zM2 10h1v1h-1zM6 10h1v1h-1zM11 10h1v1h-1zM15 10h1v1h-1zM16 10h1v1h-1zM3 11h1v1h-1zM7 11h1v1h-1zM11 11h1v1h-1zM15 11h1v1h-1zM3 12h1v1h-1zM6 12h1v1h-1zM8 12h1v1h-1zM11 12h1v1h-1zM15 12h1v1h-1zM4 13h1v1h-1zM5 13h1v1h-1zM8 13h1v1h-1zM10 13h1v1h-1zM13 13h1v1h-1zM14 13h1v1h-1zM8 14h1v1h-1zM9 14h1v1h-1zM10 14h1v1h-1z" fill="#000000"/></svg><div style="position:absolute;left:308px;top:181px;width:55px;height:19px;box-sizing:border-box;border:1px dotted #aaa;background:transparent"></div><div style="position:absolute;left:155px;width:200px;text-align:right;top:185px;font-family:'Liberation Mono',monospace;font-size:13px;line-height:14px;letter-spacing:0.2px;color:#000;white-space:nowrap;filter:url(#crisp)">0.70</div><svg style="position:absolute;left:404px;top:181px" width="16" height="19" viewBox="0 0 16 19">
<rect x="1" y="4" width="13" height="14" fill="#000"/>
<rect x="2" y="5" width="11" height="12" fill="#e8e800"/>
<rect x="3" y="5" width="2" height="12" fill="#fff"/>
<rect x="8" y="5" width="5" height="12" fill="#c8c800"/>
<rect x="3" y="6" width="1" height="10" fill="#000"/>
<rect x="5" y="6" width="1" height="10" fill="#000"/>
<rect x="7" y="6" width="1" height="10" fill="#000"/>
<rect x="9" y="6" width="1" height="10" fill="#000"/>
<rect x="11" y="6" width="1" height="10" fill="#000"/>
<rect x="0" y="2" width="15" height="3" fill="#000"/>
<rect x="1" y="3" width="13" height="1" fill="#e8e800"/>
<rect x="3" y="3" width="3" height="1" fill="#fff"/>
<rect x="7" y="1" width="1" height="1" fill="#000"/>
</svg><div style="position:absolute;left:59px;top:212px;font-family:'Liberation Sans',sans-serif;font-size:12px;line-height:14px;white-space:nowrap;filter:url(#crisp);letter-spacing:0.45px">Kombination</div><div style="position:absolute;left:150px;top:212px;font-family:'Liberation Sans',sans-serif;font-size:12px;line-height:14px;white-space:nowrap;filter:url(#crisp);">A</div><div style="position:absolute;left:176px;top:212px;font-family:'Liberation Sans',sans-serif;font-size:12px;line-height:14px;white-space:nowrap;filter:url(#crisp);letter-spacing:0.9px">V<span style="font-size:11px;position:relative;top:2px">d</span> [kN]</div><div style="position:absolute;left:258px;top:212px;font-family:'Liberation Sans',sans-serif;font-size:12px;line-height:14px;white-space:nowrap;filter:url(#crisp);letter-spacing:0.9px">H<span style="font-size:11px;position:relative;top:2px">d</span> [kN]</div><div style="position:absolute;left:335px;top:212px;font-family:'Liberation Sans',sans-serif;font-size:12px;line-height:14px;white-space:nowrap;filter:url(#crisp);letter-spacing:0.9px">N<span style="font-size:11px;position:relative;top:2px">d</span> [kN]</div><div style="position:absolute;left:60px;top:228px;width:334px;height:1px;background:#000"></div><div style="position:absolute;left:139px;top:212px;width:1px;height:63px;background:#000"></div><div style="position:absolute;left:165px;top:212px;width:1px;height:63px;background:#000"></div><div style="position:absolute;left:242px;top:212px;width:1px;height:63px;background:#000"></div><div style="position:absolute;left:319px;top:212px;width:1px;height:63px;background:#000"></div><div style="position:absolute;left:60px;top:235px;font-family:'Liberation Sans',sans-serif;font-size:12px;line-height:14px;white-space:nowrap;filter:url(#crisp);color:#0000ff;text-decoration:underline;text-underline-offset:2px">mehr ...</div><div style="position:absolute;left:100px;top:235px;font-family:'Liberation Sans',sans-serif;font-size:12px;line-height:14px;white-space:nowrap;filter:url(#crisp);width:28.5px;text-align:right">1</div><div style="position:absolute;left:146px;top:235px;width:13px;height:13px;box-sizing:border-box;border:2px solid #000"></div><div style="position:absolute;left:172px;top:232px;width:63px;height:19px;box-sizing:border-box;border:1px dotted #000;background:#fff"></div><div style="position:absolute;left:27px;width:200px;text-align:right;top:236px;font-family:'Liberation Mono',monospace;font-size:13px;line-height:14px;letter-spacing:0.2px;color:#000;white-space:nowrap;filter:url(#crisp)">1.10</div><div style="position:absolute;left:249px;top:232px;width:63px;height:19px;box-sizing:border-box;border:1px dotted #000;background:#fff"></div><div style="position:absolute;left:104px;width:200px;text-align:right;top:236px;font-family:'Liberation Mono',monospace;font-size:13px;line-height:14px;letter-spacing:0.2px;color:#000;white-space:nowrap;filter:url(#crisp)">0.00</div><div style="position:absolute;left:326px;top:232px;width:63px;height:19px;box-sizing:border-box;border:1px dotted #aaa;background:transparent"></div><div style="position:absolute;left:354px;top:241px;width:3px;height:1px;background:#000"></div><div style="position:absolute;left:359px;top:241px;width:3px;height:1px;background:#000"></div><svg style="position:absolute;left:404px;top:232px" width="16" height="19" viewBox="0 0 16 19">
<rect x="1" y="4" width="13" height="14" fill="#000"/>
<rect x="2" y="5" width="11" height="12" fill="#e8e800"/>
<rect x="3" y="5" width="2" height="12" fill="#fff"/>
<rect x="8" y="5" width="5" height="12" fill="#c8c800"/>
<rect x="3" y="6" width="1" height="10" fill="#000"/>
<rect x="5" y="6" width="1" height="10" fill="#000"/>
<rect x="7" y="6" width="1" height="10" fill="#000"/>
<rect x="9" y="6" width="1" height="10" fill="#000"/>
<rect x="11" y="6" width="1" height="10" fill="#000"/>
<rect x="0" y="2" width="15" height="3" fill="#000"/>
<rect x="1" y="3" width="13" height="1" fill="#e8e800"/>
<rect x="3" y="3" width="3" height="1" fill="#fff"/>
<rect x="7" y="1" width="1" height="1" fill="#000"/>
</svg><div style="position:absolute;left:100px;top:256px;font-family:'Liberation Sans',sans-serif;font-size:12px;line-height:14px;white-space:nowrap;filter:url(#crisp);width:28.5px;text-align:right">2</div><div style="position:absolute;left:146px;top:256px;width:13px;height:13px;box-sizing:border-box;border:2px solid #000"></div><div style="position:absolute;left:172px;top:253px;width:63px;height:19px;box-sizing:border-box;border:1px dotted #000;background:#fff"></div><div style="position:absolute;left:27px;width:200px;text-align:right;top:257px;font-family:'Liberation Mono',monospace;font-size:13px;line-height:14px;letter-spacing:0.2px;color:#000;white-space:nowrap;filter:url(#crisp)">0.00</div><div style="position:absolute;left:249px;top:253px;width:63px;height:19px;box-sizing:border-box;border:1px dotted #000;background:#fff"></div><div style="position:absolute;left:104px;width:200px;text-align:right;top:257px;font-family:'Liberation Mono',monospace;font-size:13px;line-height:14px;letter-spacing:0.2px;color:#f00;white-space:nowrap;filter:url(#crisp)">0.10</div><div style="position:absolute;left:326px;top:253px;width:63px;height:19px;box-sizing:border-box;border:1px dotted #aaa;background:transparent"></div><div style="position:absolute;left:354px;top:262px;width:3px;height:1px;background:#000"></div><div style="position:absolute;left:359px;top:262px;width:3px;height:1px;background:#000"></div><svg style="position:absolute;left:404px;top:253px" width="16" height="19" viewBox="0 0 16 19">
<rect x="1" y="4" width="13" height="14" fill="#000"/>
<rect x="2" y="5" width="11" height="12" fill="#e8e800"/>
<rect x="3" y="5" width="2" height="12" fill="#fff"/>
<rect x="8" y="5" width="5" height="12" fill="#c8c800"/>
<rect x="3" y="6" width="1" height="10" fill="#000"/>
<rect x="5" y="6" width="1" height="10" fill="#000"/>
<rect x="7" y="6" width="1" height="10" fill="#000"/>
<rect x="9" y="6" width="1" height="10" fill="#000"/>
<rect x="11" y="6" width="1" height="10" fill="#000"/>
<rect x="0" y="2" width="15" height="3" fill="#000"/>
<rect x="1" y="3" width="13" height="1" fill="#e8e800"/>
<rect x="3" y="3" width="3" height="1" fill="#fff"/>
<rect x="7" y="1" width="1" height="1" fill="#000"/>
</svg><div style="position:absolute;left:30px;top:279px;width:402px;height:27px;box-sizing:border-box;border:1px solid #a8d498;background:#dcecd0"></div><div style="position:absolute;left:30px;top:305px;width:21px;height:51px;box-sizing:border-box;border:1px solid #a8d498;background:#dcecd0"></div><div style="position:absolute;left:31px;top:304px;width:19px;height:3px;background:#dcecd0"></div><div style="position:absolute;left:36px;top:286px;width:12px;height:12px;box-sizing:border-box;border:1px solid #000;background:#fff"></div><div style="position:absolute;left:38px;top:291px;width:8px;height:2px;background:#000"></div><div style="position:absolute;left:60px;top:286px;font-family:'Liberation Sans',sans-serif;font-size:12px;line-height:14px;white-space:nowrap;filter:url(#crisp);letter-spacing:0.1px">KLED =</div><div style="position:absolute;left:108px;top:283px;width:89px;height:19px;box-sizing:border-box;border:1px dotted #000;background:#fff"></div><div style="position:absolute;left:115px;top:286px;font-family:'Liberation Sans',sans-serif;font-size:12px;line-height:14px;white-space:nowrap;filter:url(#crisp);letter-spacing:1px">mittel</div><div style="position:absolute;left:181px;top:286px;width:13px;height:13px;box-sizing:border-box;border:1px solid #000;background:#fff"></div><svg style="position:absolute;left:181px;top:286px" width="13" height="13"><path d="M2 5 H11 L6.5 10 Z" fill="#000"/></svg><div style="position:absolute;left:205px;top:286px;font-family:'Liberation Sans',sans-serif;font-size:12px;line-height:14px;white-space:nowrap;filter:url(#crisp);font-size:11px">&#8658;</div><div style="position:absolute;left:219px;top:286px;font-family:'Liberation Sans',sans-serif;font-size:12px;line-height:14px;white-space:nowrap;filter:url(#crisp);letter-spacing:0.3px">kmod =</div><div style="position:absolute;left:265px;top:286px;width:13px;height:13px;box-sizing:border-box;border:2px solid #000"></div><svg style="position:absolute;left:268px;top:289px" width="7" height="7" shape-rendering="crispEdges"><g fill="#000"><rect x="6" y="0" width="1" height="1"/><rect x="5" y="1" width="1" height="1"/><rect x="6" y="1" width="1" height="1"/><rect x="0" y="2" width="1" height="1"/><rect x="4" y="2" width="1" height="1"/><rect x="5" y="2" width="1" height="1"/><rect x="0" y="3" width="1" height="1"/><rect x="1" y="3" width="1" height="1"/><rect x="3" y="3" width="1" height="1"/><rect x="4" y="3" width="1" height="1"/><rect x="0" y="4" width="1" height="1"/><rect x="1" y="4" width="1" height="1"/><rect x="2" y="4" width="1" height="1"/><rect x="3" y="4" width="1" height="1"/><rect x="1" y="5" width="1" height="1"/><rect x="2" y="5" width="1" height="1"/><rect x="3" y="5" width="1" height="1"/><rect x="2" y="6" width="1" height="1"/></g></svg><svg style="position:absolute;left:283px;top:284px" width="19" height="15" shape-rendering="crispEdges"><path d="M8 1h1v1h-1zM9 1h1v1h-1zM10 1h1v1h-1zM7 2h1v1h-1zM4 3h1v1h-1zM5 3h1v1h-1zM6 3h1v1h-1zM7 3h1v1h-1zM9 3h1v1h-1zM12 3h1v1h-1zM13 3h1v1h-1zM14 3h1v1h-1zM3 4h1v1h-1zM7 4h1v1h-1zM9 4h1v1h-1zM12 4h1v1h-1zM3 5h1v1h-1zM6 5h1v1h-1zM7 5h1v1h-1zM9 5h1v1h-1zM14 5h1v1h-1zM1 6h1v1h-1zM2 6h1v1h-1zM4 6h1v1h-1zM6 6h1v1h-1zM7 6h1v1h-1zM9 6h1v1h-1zM10 6h1v1h-1zM15 6h1v1h-1zM1 7h1v1h-1zM3 7h1v1h-1zM6 7h1v1h-1zM13 7h1v1h-1zM15 7h1v1h-1zM16 7h1v1h-1zM2 8h1v1h-1zM3 8h1v1h-1zM8 8h1v1h-1zM10 8h1v1h-1zM13 8h1v1h-1zM14 8h1v1h-1zM16 8h1v1h-1zM2 9h1v1h-1zM3 9h1v1h-1zM5 9h1v1h-1zM10 9h1v1h-1zM12 9h1v1h-1zM13 9h1v1h-1zM15 9h1v1h-1zM16 9h1v1h-1zM3 10h1v1h-1zM5 10h1v1h-1zM7 10h1v1h-1zM8 10h1v1h-1zM10 10h1v1h-1zM12 10h1v1h-1zM14 10h1v1h-1zM6 11h1v1h-1zM8 11h1v1h-1zM10 11h1v1h-1zM13 11h1v1h-1zM14 11h1v1h-1zM5 12h1v1h-1zM7 12h1v1h-1zM10 12h1v1h-1zM12 12h1v1h-1zM13 12h1v1h-1zM14 12h1v1h-1z" fill="#9c9800"/><path d="M5 4h1v1h-1zM6 4h1v1h-1zM14 4h1v1h-1zM5 5h1v1h-1zM13 5h1v1h-1zM5 6h1v1h-1zM12 6h1v1h-1zM14 6h1v1h-1zM5 7h1v1h-1zM12 7h1v1h-1zM4 8h1v1h-1zM6 8h1v1h-1zM7 8h1v1h-1zM9 8h1v1h-1zM12 8h1v1h-1zM8 9h1v1h-1zM9 9h1v1h-1zM11 9h1v1h-1zM4 10h1v1h-1zM4 11h1v1h-1zM5 11h1v1h-1zM9 11h1v1h-1zM12 11h1v1h-1zM4 12h1v1h-1zM9 12h1v1h-1zM9 13h1v1h-1z" fill="#ffff00"/><path d="M8 2h1v1h-1zM9 2h1v1h-1zM10 2h1v1h-1zM8 3h1v1h-1zM10 3h1v1h-1zM4 4h1v1h-1zM8 4h1v1h-1zM10 4h1v1h-1zM13 4h1v1h-1zM4 5h1v1h-1zM8 5h1v1h-1zM10 5h1v1h-1zM12 5h1v1h-1zM3 6h1v1h-1zM8 6h1v1h-1zM13 6h1v1h-1zM2 7h1v1h-1zM4 7h1v1h-1zM14 7h1v1h-1zM5 8h1v1h-1zM11 8h1v1h-1zM6 9h1v1h-1zM7 9h1v1h-1zM9 10h1v1h-1zM13 10h1v1h-1z" fill="#ffffff"/><path d="M11 2h1v1h-1zM11 3h1v1h-1zM11 4h1v1h-1zM15 4h1v1h-1zM2 5h1v1h-1zM11 5h1v1h-1zM15 5h1v1h-1zM11 6h1v1h-1zM16 6h1v1h-1zM7 7h1v1h-1zM8 7h1v1h-1zM9 7h1v1h-1zM10 7h1v1h-1zM11 7h1v1h-1zM17 7h1v1h-1zM1 8h1v1h-1zM15 8h1v1h-1zM17 8h1v1h-1zM1 9h1v1h-1zM4 9h1v1h-1zM14 9h1v1h-1zM17 9h1v1h-1zM1 10h1v1h-1zM2 10h1v1h-1zM6 10h1v1h-1zM11 10h1v1h-1zM15 10h1v1h-1zM16 10h1v1h-1zM3 11h1v1h-1zM7 11h1v1h-1zM11 11h1v1h-1zM15 11h1v1h-1zM3 12h1v1h-1zM6 12h1v1h-1zM8 12h1v1h-1zM11 12h1v1h-1zM15 12h1v1h-1zM4 13h1v1h-1zM5 13h1v1h-1zM8 13h1v1h-1zM10 13h1v1h-1zM13 13h1v1h-1zM14 13h1v1h-1zM8 14h1v1h-1zM9 14h1v1h-1zM10 14h1v1h-1z" fill="#000000"/></svg><div style="position:absolute;left:308px;top:283px;width:55px;height:19px;box-sizing:border-box;border:1px dotted #aaa;background:transparent"></div><div style="position:absolute;left:155px;width:200px;text-align:right;top:287px;font-family:'Liberation Mono',monospace;font-size:13px;line-height:14px;letter-spacing:0.2px;color:#000;white-space:nowrap;filter:url(#crisp)">0.80</div><svg style="position:absolute;left:404px;top:283px" width="16" height="19" viewBox="0 0 16 19">
<rect x="1" y="4" width="13" height="14" fill="#000"/>
<rect x="2" y="5" width="11" height="12" fill="#e8e800"/>
<rect x="3" y="5" width="2" height="12" fill="#fff"/>
<rect x="8" y="5" width="5" height="12" fill="#c8c800"/>
<rect x="3" y="6" width="1" height="10" fill="#000"/>
<rect x="5" y="6" width="1" height="10" fill="#000"/>
<rect x="7" y="6" width="1" height="10" fill="#000"/>
<rect x="9" y="6" width="1" height="10" fill="#000"/>
<rect x="11" y="6" width="1" height="10" fill="#000"/>
<rect x="0" y="2" width="15" height="3" fill="#000"/>
<rect x="1" y="3" width="13" height="1" fill="#e8e800"/>
<rect x="3" y="3" width="3" height="1" fill="#fff"/>
<rect x="7" y="1" width="1" height="1" fill="#000"/>
</svg><div style="position:absolute;left:59px;top:314px;font-family:'Liberation Sans',sans-serif;font-size:12px;line-height:14px;white-space:nowrap;filter:url(#crisp);letter-spacing:0.45px">Kombination</div><div style="position:absolute;left:150px;top:314px;font-family:'Liberation Sans',sans-serif;font-size:12px;line-height:14px;white-space:nowrap;filter:url(#crisp);">A</div><div style="position:absolute;left:176px;top:314px;font-family:'Liberation Sans',sans-serif;font-size:12px;line-height:14px;white-space:nowrap;filter:url(#crisp);letter-spacing:0.9px">V<span style="font-size:11px;position:relative;top:2px">d</span> [kN]</div><div style="position:absolute;left:258px;top:314px;font-family:'Liberation Sans',sans-serif;font-size:12px;line-height:14px;white-space:nowrap;filter:url(#crisp);letter-spacing:0.9px">H<span style="font-size:11px;position:relative;top:2px">d</span> [kN]</div><div style="position:absolute;left:335px;top:314px;font-family:'Liberation Sans',sans-serif;font-size:12px;line-height:14px;white-space:nowrap;filter:url(#crisp);letter-spacing:0.9px">N<span style="font-size:11px;position:relative;top:2px">d</span> [kN]</div><div style="position:absolute;left:60px;top:330px;width:334px;height:1px;background:#000"></div><div style="position:absolute;left:139px;top:314px;width:1px;height:42px;background:#000"></div><div style="position:absolute;left:165px;top:314px;width:1px;height:42px;background:#000"></div><div style="position:absolute;left:242px;top:314px;width:1px;height:42px;background:#000"></div><div style="position:absolute;left:319px;top:314px;width:1px;height:42px;background:#000"></div><div style="position:absolute;left:60px;top:337px;font-family:'Liberation Sans',sans-serif;font-size:12px;line-height:14px;white-space:nowrap;filter:url(#crisp);color:#0000ff;text-decoration:underline;text-underline-offset:2px">mehr ...</div><div style="position:absolute;left:100px;top:337px;font-family:'Liberation Sans',sans-serif;font-size:12px;line-height:14px;white-space:nowrap;filter:url(#crisp);width:28.5px;text-align:right">1</div><div style="position:absolute;left:146px;top:337px;width:13px;height:13px;box-sizing:border-box;border:2px solid #000"></div><div style="position:absolute;left:172px;top:334px;width:63px;height:19px;box-sizing:border-box;border:1px dotted #000;background:#fff"></div><div style="position:absolute;left:27px;width:200px;text-align:right;top:338px;font-family:'Liberation Mono',monospace;font-size:13px;line-height:14px;letter-spacing:0.2px;color:#000;white-space:nowrap;filter:url(#crisp)">0.70</div><div style="position:absolute;left:249px;top:334px;width:63px;height:19px;box-sizing:border-box;border:1px dotted #000;background:#fff"></div><div style="position:absolute;left:104px;width:200px;text-align:right;top:338px;font-family:'Liberation Mono',monospace;font-size:13px;line-height:14px;letter-spacing:0.2px;color:#000;white-space:nowrap;filter:url(#crisp)">0.00</div><div style="position:absolute;left:326px;top:334px;width:63px;height:19px;box-sizing:border-box;border:1px dotted #aaa;background:transparent"></div><div style="position:absolute;left:354px;top:343px;width:3px;height:1px;background:#000"></div><div style="position:absolute;left:359px;top:343px;width:3px;height:1px;background:#000"></div><div style="position:absolute;left:30px;top:360px;width:402px;height:27px;box-sizing:border-box;border:1px solid #a8d498;background:#dcecd0"></div><div style="position:absolute;left:30px;top:386px;width:21px;height:51px;box-sizing:border-box;border:1px solid #a8d498;background:#dcecd0"></div><div style="position:absolute;left:31px;top:385px;width:19px;height:3px;background:#dcecd0"></div><div style="position:absolute;left:36px;top:367px;width:12px;height:12px;box-sizing:border-box;border:1px solid #000;background:#fff"></div><div style="position:absolute;left:38px;top:372px;width:8px;height:2px;background:#000"></div><div style="position:absolute;left:60px;top:367px;font-family:'Liberation Sans',sans-serif;font-size:12px;line-height:14px;white-space:nowrap;filter:url(#crisp);letter-spacing:0.1px">KLED =</div><div style="position:absolute;left:108px;top:364px;width:89px;height:19px;box-sizing:border-box;border:1px dotted #000;background:#fff"></div><div style="position:absolute;left:115px;top:367px;font-family:'Liberation Sans',sans-serif;font-size:12px;line-height:14px;white-space:nowrap;filter:url(#crisp);letter-spacing:1px">kurz</div><div style="position:absolute;left:181px;top:367px;width:13px;height:13px;box-sizing:border-box;border:1px solid #000;background:#fff"></div><svg style="position:absolute;left:181px;top:367px" width="13" height="13"><path d="M2 5 H11 L6.5 10 Z" fill="#000"/></svg><div style="position:absolute;left:205px;top:367px;font-family:'Liberation Sans',sans-serif;font-size:12px;line-height:14px;white-space:nowrap;filter:url(#crisp);font-size:11px">&#8658;</div><div style="position:absolute;left:219px;top:367px;font-family:'Liberation Sans',sans-serif;font-size:12px;line-height:14px;white-space:nowrap;filter:url(#crisp);letter-spacing:0.3px">kmod =</div><div style="position:absolute;left:265px;top:367px;width:13px;height:13px;box-sizing:border-box;border:2px solid #000"></div><svg style="position:absolute;left:268px;top:370px" width="7" height="7" shape-rendering="crispEdges"><g fill="#000"><rect x="6" y="0" width="1" height="1"/><rect x="5" y="1" width="1" height="1"/><rect x="6" y="1" width="1" height="1"/><rect x="0" y="2" width="1" height="1"/><rect x="4" y="2" width="1" height="1"/><rect x="5" y="2" width="1" height="1"/><rect x="0" y="3" width="1" height="1"/><rect x="1" y="3" width="1" height="1"/><rect x="3" y="3" width="1" height="1"/><rect x="4" y="3" width="1" height="1"/><rect x="0" y="4" width="1" height="1"/><rect x="1" y="4" width="1" height="1"/><rect x="2" y="4" width="1" height="1"/><rect x="3" y="4" width="1" height="1"/><rect x="1" y="5" width="1" height="1"/><rect x="2" y="5" width="1" height="1"/><rect x="3" y="5" width="1" height="1"/><rect x="2" y="6" width="1" height="1"/></g></svg><svg style="position:absolute;left:283px;top:365px" width="19" height="15" shape-rendering="crispEdges"><path d="M8 1h1v1h-1zM9 1h1v1h-1zM10 1h1v1h-1zM7 2h1v1h-1zM4 3h1v1h-1zM5 3h1v1h-1zM6 3h1v1h-1zM7 3h1v1h-1zM9 3h1v1h-1zM12 3h1v1h-1zM13 3h1v1h-1zM14 3h1v1h-1zM3 4h1v1h-1zM7 4h1v1h-1zM9 4h1v1h-1zM12 4h1v1h-1zM3 5h1v1h-1zM6 5h1v1h-1zM7 5h1v1h-1zM9 5h1v1h-1zM14 5h1v1h-1zM1 6h1v1h-1zM2 6h1v1h-1zM4 6h1v1h-1zM6 6h1v1h-1zM7 6h1v1h-1zM9 6h1v1h-1zM10 6h1v1h-1zM15 6h1v1h-1zM1 7h1v1h-1zM3 7h1v1h-1zM6 7h1v1h-1zM13 7h1v1h-1zM15 7h1v1h-1zM16 7h1v1h-1zM2 8h1v1h-1zM3 8h1v1h-1zM8 8h1v1h-1zM10 8h1v1h-1zM13 8h1v1h-1zM14 8h1v1h-1zM16 8h1v1h-1zM2 9h1v1h-1zM3 9h1v1h-1zM5 9h1v1h-1zM10 9h1v1h-1zM12 9h1v1h-1zM13 9h1v1h-1zM15 9h1v1h-1zM16 9h1v1h-1zM3 10h1v1h-1zM5 10h1v1h-1zM7 10h1v1h-1zM8 10h1v1h-1zM10 10h1v1h-1zM12 10h1v1h-1zM14 10h1v1h-1zM6 11h1v1h-1zM8 11h1v1h-1zM10 11h1v1h-1zM13 11h1v1h-1zM14 11h1v1h-1zM5 12h1v1h-1zM7 12h1v1h-1zM10 12h1v1h-1zM12 12h1v1h-1zM13 12h1v1h-1zM14 12h1v1h-1z" fill="#9c9800"/><path d="M5 4h1v1h-1zM6 4h1v1h-1zM14 4h1v1h-1zM5 5h1v1h-1zM13 5h1v1h-1zM5 6h1v1h-1zM12 6h1v1h-1zM14 6h1v1h-1zM5 7h1v1h-1zM12 7h1v1h-1zM4 8h1v1h-1zM6 8h1v1h-1zM7 8h1v1h-1zM9 8h1v1h-1zM12 8h1v1h-1zM8 9h1v1h-1zM9 9h1v1h-1zM11 9h1v1h-1zM4 10h1v1h-1zM4 11h1v1h-1zM5 11h1v1h-1zM9 11h1v1h-1zM12 11h1v1h-1zM4 12h1v1h-1zM9 12h1v1h-1zM9 13h1v1h-1z" fill="#ffff00"/><path d="M8 2h1v1h-1zM9 2h1v1h-1zM10 2h1v1h-1zM8 3h1v1h-1zM10 3h1v1h-1zM4 4h1v1h-1zM8 4h1v1h-1zM10 4h1v1h-1zM13 4h1v1h-1zM4 5h1v1h-1zM8 5h1v1h-1zM10 5h1v1h-1zM12 5h1v1h-1zM3 6h1v1h-1zM8 6h1v1h-1zM13 6h1v1h-1zM2 7h1v1h-1zM4 7h1v1h-1zM14 7h1v1h-1zM5 8h1v1h-1zM11 8h1v1h-1zM6 9h1v1h-1zM7 9h1v1h-1zM9 10h1v1h-1zM13 10h1v1h-1z" fill="#ffffff"/><path d="M11 2h1v1h-1zM11 3h1v1h-1zM11 4h1v1h-1zM15 4h1v1h-1zM2 5h1v1h-1zM11 5h1v1h-1zM15 5h1v1h-1zM11 6h1v1h-1zM16 6h1v1h-1zM7 7h1v1h-1zM8 7h1v1h-1zM9 7h1v1h-1zM10 7h1v1h-1zM11 7h1v1h-1zM17 7h1v1h-1zM1 8h1v1h-1zM15 8h1v1h-1zM17 8h1v1h-1zM1 9h1v1h-1zM4 9h1v1h-1zM14 9h1v1h-1zM17 9h1v1h-1zM1 10h1v1h-1zM2 10h1v1h-1zM6 10h1v1h-1zM11 10h1v1h-1zM15 10h1v1h-1zM16 10h1v1h-1zM3 11h1v1h-1zM7 11h1v1h-1zM11 11h1v1h-1zM15 11h1v1h-1zM3 12h1v1h-1zM6 12h1v1h-1zM8 12h1v1h-1zM11 12h1v1h-1zM15 12h1v1h-1zM4 13h1v1h-1zM5 13h1v1h-1zM8 13h1v1h-1zM10 13h1v1h-1zM13 13h1v1h-1zM14 13h1v1h-1zM8 14h1v1h-1zM9 14h1v1h-1zM10 14h1v1h-1z" fill="#000000"/></svg><div style="position:absolute;left:308px;top:364px;width:55px;height:19px;box-sizing:border-box;border:1px dotted #aaa;background:transparent"></div><div style="position:absolute;left:155px;width:200px;text-align:right;top:368px;font-family:'Liberation Mono',monospace;font-size:13px;line-height:14px;letter-spacing:0.2px;color:#000;white-space:nowrap;filter:url(#crisp)">0.90</div><svg style="position:absolute;left:404px;top:364px" width="16" height="19" viewBox="0 0 16 19">
<rect x="1" y="4" width="13" height="14" fill="#000"/>
<rect x="2" y="5" width="11" height="12" fill="#e8e800"/>
<rect x="3" y="5" width="2" height="12" fill="#fff"/>
<rect x="8" y="5" width="5" height="12" fill="#c8c800"/>
<rect x="3" y="6" width="1" height="10" fill="#000"/>
<rect x="5" y="6" width="1" height="10" fill="#000"/>
<rect x="7" y="6" width="1" height="10" fill="#000"/>
<rect x="9" y="6" width="1" height="10" fill="#000"/>
<rect x="11" y="6" width="1" height="10" fill="#000"/>
<rect x="0" y="2" width="15" height="3" fill="#000"/>
<rect x="1" y="3" width="13" height="1" fill="#e8e800"/>
<rect x="3" y="3" width="3" height="1" fill="#fff"/>
<rect x="7" y="1" width="1" height="1" fill="#000"/>
</svg><div style="position:absolute;left:59px;top:395px;font-family:'Liberation Sans',sans-serif;font-size:12px;line-height:14px;white-space:nowrap;filter:url(#crisp);letter-spacing:0.45px">Kombination</div><div style="position:absolute;left:150px;top:395px;font-family:'Liberation Sans',sans-serif;font-size:12px;line-height:14px;white-space:nowrap;filter:url(#crisp);">A</div><div style="position:absolute;left:176px;top:395px;font-family:'Liberation Sans',sans-serif;font-size:12px;line-height:14px;white-space:nowrap;filter:url(#crisp);letter-spacing:0.9px">V<span style="font-size:11px;position:relative;top:2px">d</span> [kN]</div><div style="position:absolute;left:258px;top:395px;font-family:'Liberation Sans',sans-serif;font-size:12px;line-height:14px;white-space:nowrap;filter:url(#crisp);letter-spacing:0.9px">H<span style="font-size:11px;position:relative;top:2px">d</span> [kN]</div><div style="position:absolute;left:335px;top:395px;font-family:'Liberation Sans',sans-serif;font-size:12px;line-height:14px;white-space:nowrap;filter:url(#crisp);letter-spacing:0.9px">N<span style="font-size:11px;position:relative;top:2px">d</span> [kN]</div><div style="position:absolute;left:60px;top:411px;width:334px;height:1px;background:#000"></div><div style="position:absolute;left:139px;top:395px;width:1px;height:42px;background:#000"></div><div style="position:absolute;left:165px;top:395px;width:1px;height:42px;background:#000"></div><div style="position:absolute;left:242px;top:395px;width:1px;height:42px;background:#000"></div><div style="position:absolute;left:319px;top:395px;width:1px;height:42px;background:#000"></div><div style="position:absolute;left:60px;top:418px;font-family:'Liberation Sans',sans-serif;font-size:12px;line-height:14px;white-space:nowrap;filter:url(#crisp);color:#0000ff;text-decoration:underline;text-underline-offset:2px">mehr ...</div><div style="position:absolute;left:100px;top:418px;font-family:'Liberation Sans',sans-serif;font-size:12px;line-height:14px;white-space:nowrap;filter:url(#crisp);width:28.5px;text-align:right">1</div><div style="position:absolute;left:146px;top:418px;width:13px;height:13px;box-sizing:border-box;border:2px solid #000"></div><div style="position:absolute;left:172px;top:415px;width:63px;height:19px;box-sizing:border-box;border:1px dotted #000;background:#fff"></div><div style="position:absolute;left:27px;width:200px;text-align:right;top:419px;font-family:'Liberation Mono',monospace;font-size:13px;line-height:14px;letter-spacing:0.2px;color:#000;white-space:nowrap;filter:url(#crisp)">2.10</div><div style="position:absolute;left:249px;top:415px;width:63px;height:19px;box-sizing:border-box;border:1px dotted #000;background:#fff"></div><div style="position:absolute;left:104px;width:200px;text-align:right;top:419px;font-family:'Liberation Mono',monospace;font-size:13px;line-height:14px;letter-spacing:0.2px;color:#000;white-space:nowrap;filter:url(#crisp)">0.00</div><div style="position:absolute;left:326px;top:415px;width:63px;height:19px;box-sizing:border-box;border:1px dotted #aaa;background:transparent"></div><div style="position:absolute;left:354px;top:424px;width:3px;height:1px;background:#000"></div><div style="position:absolute;left:359px;top:424px;width:3px;height:1px;background:#000"></div><div style="position:absolute;left:30px;top:441px;width:402px;height:24px;box-sizing:border-box;border:1px solid #a8d498;background:#dcecd0"></div><div style="position:absolute;left:39px;top:445px;font-family:'Liberation Sans',sans-serif;font-size:12px;line-height:14px;white-space:nowrap;filter:url(#crisp);color:#0000ff;text-decoration:underline;text-underline-offset:2px">mehr ...</div></body></html>
